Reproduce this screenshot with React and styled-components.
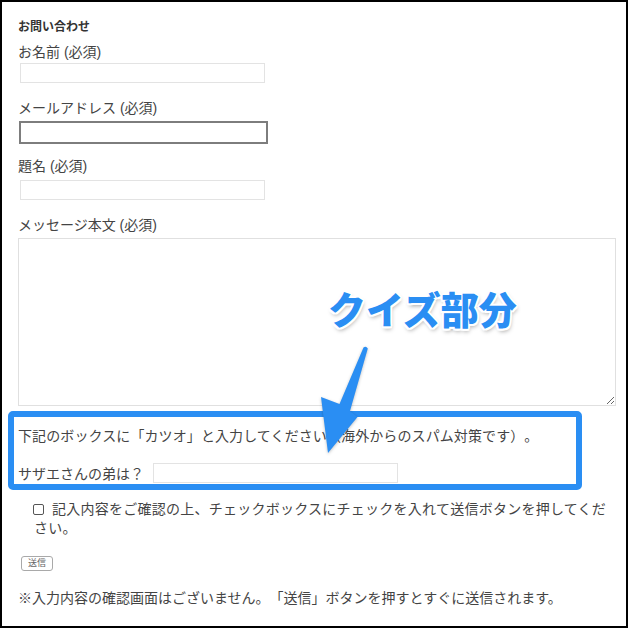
import React from "react";
import styled, { createGlobalStyle } from "styled-components";

const BLUE = "#2a8ef3";

const GlobalStyle = createGlobalStyle`
  html, body { margin: 0; padding: 0; background: #fff; }
  body {
    font-family: "Liberation Sans", "Noto Sans CJK JP", sans-serif;
    color: #444;
    text-spacing-trim: space-all;
  }
`;

const Frame = styled.div`
  position: relative;
  width: 628px;
  height: 628px;
  box-sizing: border-box;
  border: 2px solid #000;
  padding: 17px 0 0 16px;
  overflow: hidden;
  background: #fff;
`;

const Title = styled.h3`
  margin: 0;
  font-size: 12px;
  line-height: 16px;
  font-weight: 700;
  color: #333;
`;

const FieldLabel = styled.label`
  display: block;
  margin-top: ${(p) => p.$gap}px;
  font-size: 14px;
  line-height: 20px;
  color: #444;
`;

const TextInput = styled.input`
  display: block;
  box-sizing: border-box;
  width: ${(p) => (p.$active ? 249 : 245)}px;
  height: ${(p) => (p.$active ? 23 : 20)}px;
  margin: ${(p) => p.$gap}px 0 0 ${(p) => (p.$active ? 1 : 2)}px;
  border: ${(p) => (p.$active ? "2px solid #7d7d7d" : "1px solid #e3e3e3")};
  border-radius: 0;
  padding: 0 4px;
  background: #fff;
  outline: none;
`;

const MessageArea = styled.textarea`
  display: block;
  box-sizing: border-box;
  width: 598px;
  height: 168px;
  margin-top: 3px;
  border: 1px solid #e0e0e0;
  border-radius: 0;
  background: #fff;
  outline: none;
`;

const QuizBox = styled.div`
  box-sizing: border-box;
  width: 574px;
  height: 79px;
  margin: 5px 0 0 -10px;
  border: 6px solid ${BLUE};
  border-radius: 5px;
  padding: 9px 0 1px 4px;
`;

const QuizText = styled.p`
  margin: 0;
  font-size: 14px;
  line-height: 20px;
  color: #444;
  white-space: nowrap;
  letter-spacing: 0.1px;
`;

const QuizRow = styled.div`
  display: flex;
  align-items: center;
  margin-top: 17px;
  height: 20px;
  font-size: 14px;
  color: #444;
`;

const QuizInput = styled.input`
  box-sizing: border-box;
  width: 245px;
  height: 20px;
  margin-left: 9px;
  border: 1px solid #e3e3e3;
  border-radius: 0;
  background: #fff;
  outline: none;
`;

const Consent = styled.p`
  box-sizing: border-box;
  width: 596px;
  margin: 10px 0 0;
  padding-left: 16px;
  font-size: 14px;
  line-height: 19px;
  letter-spacing: 0.25px;
  color: #444;
`;

const Check = styled.input`
  appearance: none;
  -webkit-appearance: none;
  box-sizing: border-box;
  width: 11px;
  height: 11px;
  margin: 0 8px 0 -1px;
  border: 1px solid #555;
  border-radius: 2px;
  background: #fff;
  vertical-align: -1px;
`;

const SendButton = styled.button`
  display: block;
  box-sizing: border-box;
  width: 32px;
  height: 15px;
  margin: 18px 0 0 3px;
  padding: 0;
  border: 1px solid #a9a9a9;
  border-radius: 3px;
  background: #fff;
  color: #666;
  font-family: "Liberation Sans", "Noto Sans CJK JP", sans-serif;
  font-size: 9px;
  line-height: 13px;
`;

const Note = styled.p`
  margin: 17px 0 0;
  font-size: 14px;
  line-height: 20px;
  color: #444;
  white-space: nowrap;
`;

const Callout = styled.div`
  position: absolute;
  left: 326px;
  top: 287px;
  font-family: "Noto Sans CJK JP", sans-serif;
  font-size: 38px;
  line-height: 38px;
  font-weight: 900;
  color: ${BLUE};
  white-space: nowrap;
  text-shadow:
    2px 0 0 #fff, -2px 0 0 #fff, 0 2px 0 #fff, 0 -2px 0 #fff,
    1.5px 1.5px 0 #fff, -1.5px 1.5px 0 #fff, 1.5px -1.5px 0 #fff, -1.5px -1.5px 0 #fff,
    1px 3px 4px rgba(0, 0, 0, 0.35);
`;

const Arrow = styled.svg`
  position: absolute;
  left: 308px;
  top: 338px;
  overflow: visible;
  filter: drop-shadow(0 1px 1.5px rgba(0, 0, 0, 0.25));
`;

export default function App() {
  return (
    <>
      <GlobalStyle />
      <Frame>
        <Title>お問い合わせ</Title>
        <FieldLabel $gap={7}>お名前 (必須)</FieldLabel>
        <TextInput $gap={1} type="text" />
        <FieldLabel $gap={15}>メールアドレス (必須)</FieldLabel>
        <TextInput $gap={3} $active type="text" />
        <FieldLabel $gap={12}>題名 (必須)</FieldLabel>
        <TextInput $gap={4} type="text" />
        <FieldLabel $gap={15}>メッセージ本文 (必須)</FieldLabel>
        <MessageArea />
        <QuizBox>
          <QuizText>
            下記のボックスに「カツオ」と入力してください（海外からのスパム対策です）。
          </QuizText>
          <QuizRow>
            サザエさんの弟は？
            <QuizInput type="text" />
          </QuizRow>
        </QuizBox>
        <Consent>
          <Check type="checkbox" />
          記入内容をご確認の上、チェックボックスにチェックを入れて送信ボタンを押してください。
        </Consent>
        <SendButton type="button">送信</SendButton>
        <Note>
          ※入力内容の確認画面はございません。「送信」ボタンを押すとすぐに送信されます。
        </Note>
        <Callout>クイズ部分</Callout>
        <Arrow width="62" height="120" viewBox="310 340 62 120">
          <path
            d="M363.5 347.5 Q366 345.5 367.8 348.5 L350 411 L357.5 417 L328 453 L321 397 L339.5 404 Z"
            fill={BLUE}
          />
        </Arrow>
      </Frame>
    </>
  );
}
